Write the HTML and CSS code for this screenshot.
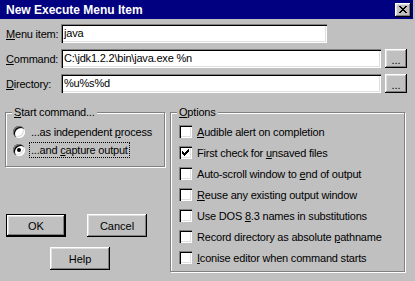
FILE: index.html
```html
<!DOCTYPE html>
<html>

<head>
    <link rel="stylesheet" href="styles.css">
</head>

<body>
    <div class="window">
        <div class="titlebar">
            <span class="title">New Execute Menu Item</span>
            <span class="close">
                <svg width="8" height="7" viewBox="0 0 8 7" shape-rendering="crispEdges">
                    <path d="M0 0h2v1h1v1h2V1h1V0h2v1H7v1H6v1H5v1h1v1h1v1h1v1H6V6H5V5H3v1H2v1H0V6h1V5h1V4h1V3H2V2H1V1H0z" />
                </svg>
            </span>
        </div>
        <div class="content">
            <div class="row">
                <span class="label"><u>M</u>enu item:</span>
                <div class="field field_short">java</div>
            </div>
            <div class="row">
                <span class="label"><u>C</u>ommand:</span>
                <div class="field field_long">C:\jdk1.2.2\bin\java.exe %n</div>
                <button class="browse">...</button>
            </div>
            <div class="row">
                <span class="label"><u>D</u>irectory:</span>
                <div class="field field_long">%u%s%d</div>
                <button class="browse">...</button>
            </div>

            <div class="lower">
                <div class="left">
                    <div class="group group_start">
                        <div class="legend"><u>S</u>tart command...</div>
                        <div class="option">
                            <span class="radio"></span>
                            <span class="option_text">...as independent <u>p</u>rocess</span>
                        </div>
                        <div class="option">
                            <span class="radio"><i></i></span>
                            <span class="option_text focus">...and <u>c</u>apture output</span>
                        </div>
                    </div>
                    <div class="buttons">
                        <button class="btn default">OK</button>
                        <button class="btn">Cancel</button>
                    </div>
                    <button class="btn help">Help</button>
                </div>

                <div class="group group_options">
                    <div class="legend"><u>O</u>ptions</div>
                    <div class="check"><span class="box"></span><span><u>A</u>udible alert on completion</span></div>
                    <div class="check">
                        <span class="box">
                            <svg width="7" height="7" viewBox="0 0 7 7" shape-rendering="crispEdges">
                                <path d="M0 2V5H1V6H2V7H3V6H4V5H5V4H6V3H7V0H6V1H5V2H4V3H3V4H2V3H1V2Z" />
                            </svg>
                        </span>
                        <span>First check for <u>u</u>nsaved files</span>
                    </div>
                    <div class="check"><span class="box"></span><span>Auto-scroll window to <u>e</u>nd of output</span></div>
                    <div class="check"><span class="box"></span><span><u>R</u>euse any existing output window</span></div>
                    <div class="check"><span class="box"></span><span>Use DOS <u>8</u>.3 names in substitutions</span></div>
                    <div class="check"><span class="box"></span><span>Record directory as absolute <u>p</u>athname</span></div>
                    <div class="check"><span class="box"></span><span><u>I</u>conise editor when command starts</span></div>
                </div>
            </div>
        </div>
    </div>
</body>

</html>
```

FILE: styles.css
```css
* {
    box-sizing: border-box;
}

body {
    margin: 0;
    background-color: #c0c0c0;
    font-family: "Liberation Sans", Arial, sans-serif;
    font-size: 11px;
    letter-spacing: -0.2px;
    color: black;
}

.window {
    width: 415px;
    height: 281px;
    background-color: #c0c0c0;
    overflow: hidden;
}

.titlebar {
    height: 19px;
    margin-right: 2px;
    padding: 0 2px 0 6px;
    background-color: #000080;
    display: flex;
    align-items: center;
    justify-content: space-between;
}

.title {
    color: white;
    font-weight: bold;
    font-size: 12px;
    letter-spacing: 0;
}

.close {
    width: 16px;
    height: 14px;
    background-color: #c0c0c0;
    box-shadow: inset -1px -1px #000, inset 1px 1px #fff, inset -2px -2px #808080, inset 2px 2px #dfdfdf;
    display: flex;
    align-items: center;
    justify-content: center;
}

.content {
    padding: 5px 0 0 6px;
}

.row {
    display: flex;
    align-items: center;
    height: 19px;
}

.row + .row {
    margin-top: 6px;
}

.label {
    width: 55px;
}

.field {
    height: 19px;
    padding: 0 3px;
    line-height: 19px;
    background-color: white;
    box-shadow: inset 1px 1px #808080, inset 2px 2px #000, inset -1px -1px #fff, inset -2px -2px #dfdfdf;
}

.field_short {
    width: 266px;
}

.field_long {
    width: 320px;
}

.browse {
    width: 22px;
    height: 19px;
    margin-left: 4px;
    padding: 3px 0 0 0;
    border: none;
    font: inherit;
    letter-spacing: 0;
    background-color: #c0c0c0;
    box-shadow: inset -1px -1px #000, inset 1px 1px #fff, inset -2px -2px #808080, inset 2px 2px #dfdfdf;
}

.lower {
    margin: 19px 0 0 -1px;
    display: grid;
    grid-template-columns: 160px 235px;
    column-gap: 5px;
}

.group {
    border: 1px solid #808080;
    box-shadow: 1px 1px 0 #fff, inset 1px 1px 0 #fff;
}

.legend {
    display: table;
    margin: -7px 0 0 6px;
    padding: 0 2px;
    line-height: 13px;
    background-color: #c0c0c0;
}

.group_start {
    height: 55px;
    padding-left: 7px;
}

.group_start .legend {
    margin-left: -1px;
    margin-bottom: 4px;
}

.option {
    display: flex;
    align-items: center;
    gap: 4px;
    height: 18px;
}

.radio {
    width: 12px;
    height: 12px;
    border-radius: 50%;
    background-color: white;
    box-shadow: inset 1px 1px #808080, inset 2px 2px #000, inset -1px -1px #fff, inset -2px -2px #dfdfdf;
    display: flex;
    align-items: center;
    justify-content: center;
}

.radio i {
    width: 4px;
    height: 4px;
    border-radius: 50%;
    background-color: black;
}

.option_text {
    padding: 0 1px;
    line-height: 14px;
    border: 1px solid transparent;
}

.focus {
    border: 1px dotted black;
}

.buttons {
    margin: 47px 0 0 1px;
    display: flex;
    gap: 21px;
}

.btn {
    width: 60px;
    height: 23px;
    padding: 0;
    border: none;
    font: inherit;
    color: black;
    background-color: #c0c0c0;
    box-shadow: inset -1px -1px #000, inset 1px 1px #fff, inset -2px -2px #808080, inset 2px 2px #dfdfdf;
}

.default {
    box-shadow: inset 0 0 0 1px #000, inset -2px -2px #000, inset 2px 2px #fff, inset -3px -3px #808080, inset 3px 3px #dfdfdf;
}

.help {
    margin: 10px 0 0 45px;
}

.group_options {
    height: 160px;
    padding-left: 8px;
}

.group_options .legend {
    margin-left: -2px;
    margin-bottom: 2px;
}

.check {
    display: flex;
    align-items: center;
    gap: 5px;
    height: 21px;
}

.box {
    width: 13px;
    height: 13px;
    background-color: white;
    box-shadow: inset 1px 1px #808080, inset 2px 2px #000, inset -1px -1px #fff, inset -2px -2px #dfdfdf;
    display: flex;
    align-items: center;
    justify-content: center;
}
```
